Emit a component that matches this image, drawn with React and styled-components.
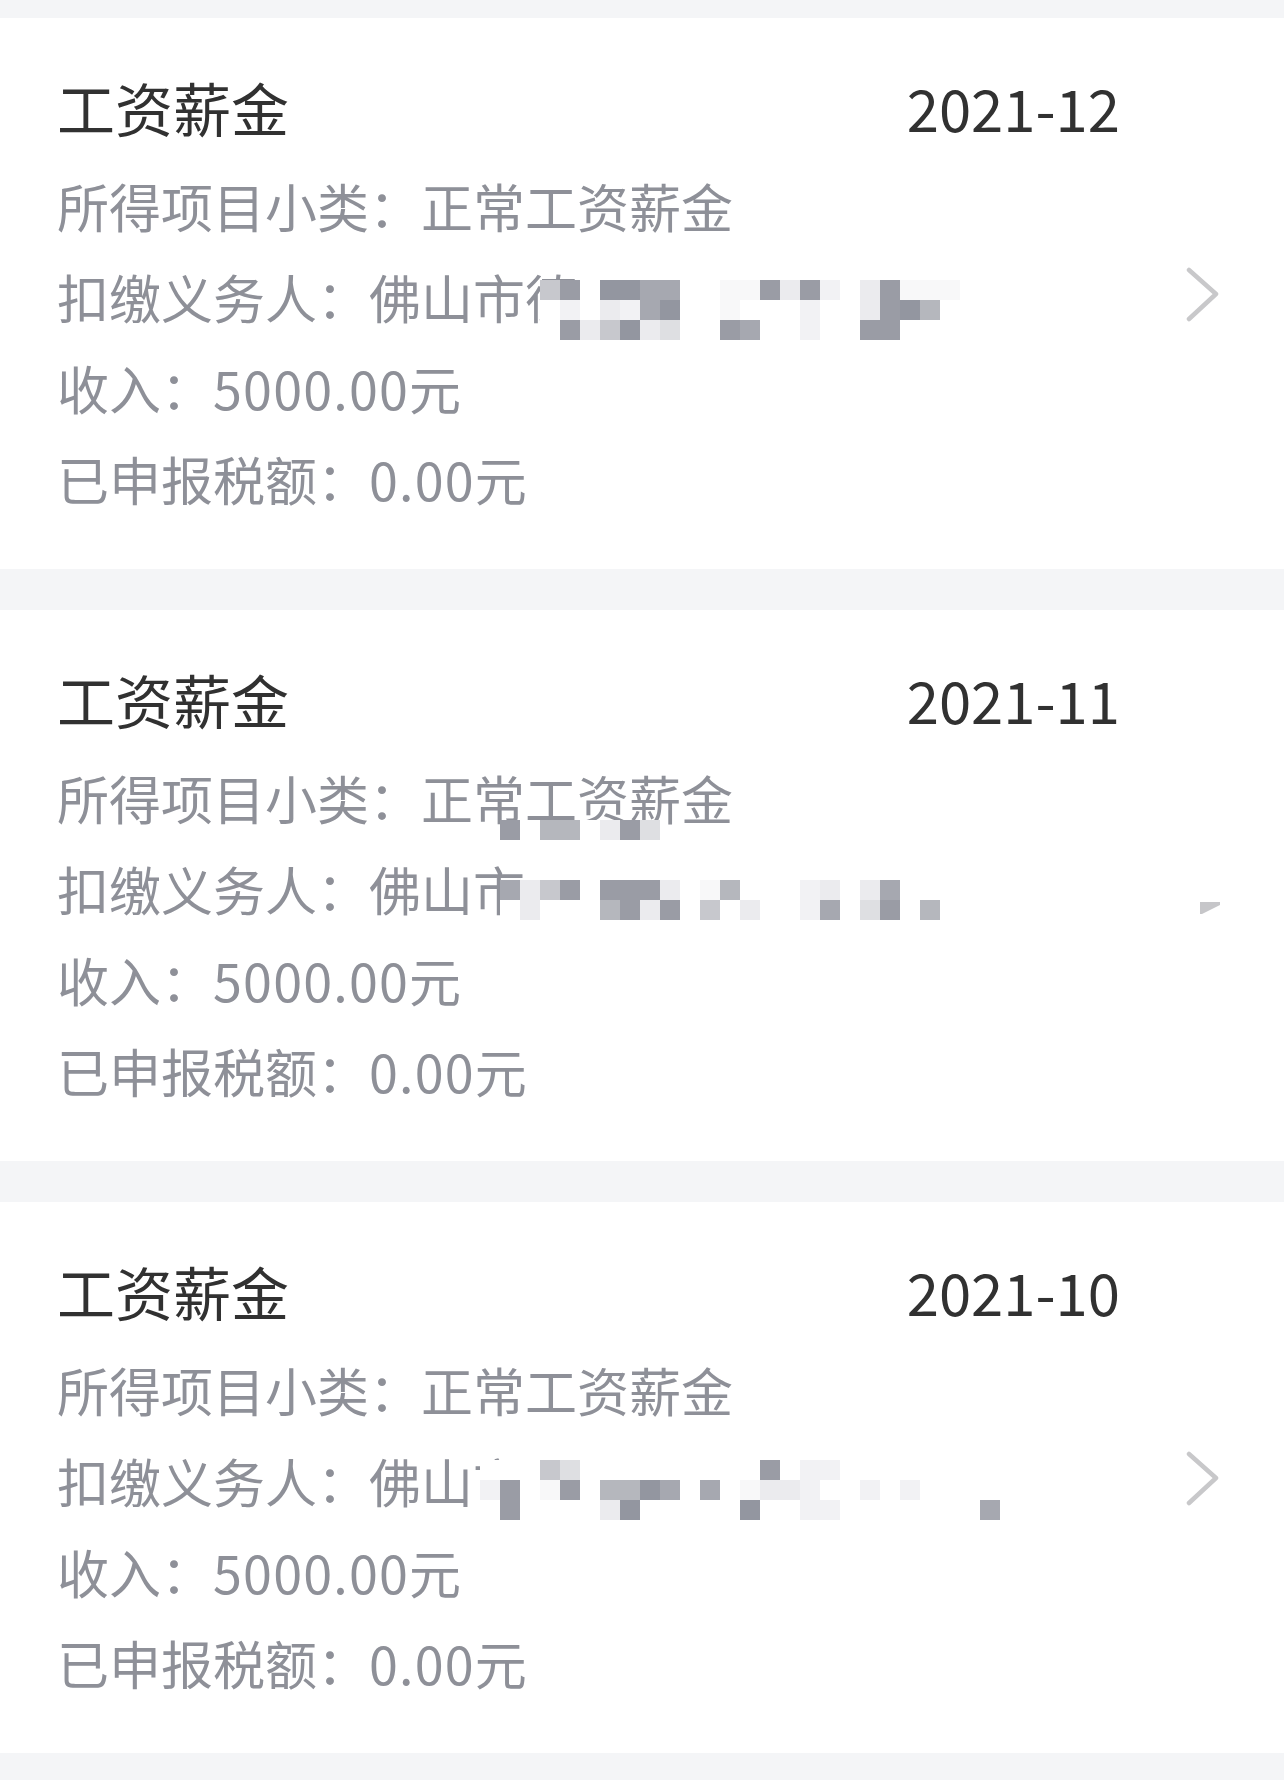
import styled, { createGlobalStyle } from "styled-components";

const GlobalStyle = createGlobalStyle`
  html, body {
    margin: 0;
    padding: 0;
    background: #f4f5f7;
  }
  body {
    font-family: "Noto Sans CJK SC", "Noto Sans", sans-serif;
  }
`;

// mosaic shades
const SHADES = {
  ".": "#ffffff",
  " ": "transparent",
  a: "#f8f8f9",
  b: "#f2f2f4",
  c: "#ebebee",
  d: "#dedfe2",
  e: "#c7c8cd",
  f: "#b5b7bd",
  g: "#a6a8b0",
  h: "#9a9ca5",
  i: "#9396a0",
};

const CELL = 20;

const records = [
  {
    month: "2021-12",
    payer: "佛山市德",
    mosaic: {
      2: { from: 3, top: 29, rows: ["eh.iigg..aahchb.chaaa", ".b.cbgi..a...b..chif.", ".hceicd..hg..b..hh..."] },
    },
    chevron: true,
  },
  {
    month: "2021-11",
    payer: "佛山市",
    mosaic: {
      1: { from: 1, top: 68, rows: ["h.ff.chd"] },
      2: { from: 1, top: 37, rows: ["gceh.hhhc.af...bc.cg..", ".c...fhch.e.c..bg.dh.f"] },
    },
    chevron: false,
  },
  {
    month: "2021-10",
    payer: "佛山市",
    mosaic: {
      2: {
        from: 0,
        top: 25,
        rows: ["...ed.........h.bb........", "bh.ah.ffig.g.accb..b.b....", ".h....ci.....i..bb.......g"],
      },
    },
    chevron: true,
  },
];

export default function App() {
  return (
    <>
      <GlobalStyle />
      <Page>
        {records.map((r) => (
          <Card key={r.month}>
            <Body>
              <Head>
                <Title>工资薪金</Title>
                <Month>{r.month}</Month>
              </Head>
              <Line>
                所得项目小类：正常工资薪金
                {r.mosaic[1] && <Mosaic {...r.mosaic[1]} />}
              </Line>
              <Line>
                扣缴义务人：{r.payer}
                {r.mosaic[2] && <Mosaic {...r.mosaic[2]} />}
              </Line>
              <Line>
                收入：<Amount>5000.00</Amount>元
              </Line>
              <Line>
                已申报税额：<Amount>0.00</Amount>元
              </Line>
            </Body>
            <Arrow width="34" height="56" viewBox="0 0 34 56">
              {r.chevron ? (
                <polyline
                  points="3,4 30,28 3,53"
                  fill="none"
                  stroke="#c8c8ca"
                  strokeWidth="4.5"
                  strokeLinecap="round"
                  strokeLinejoin="round"
                />
              ) : (
                <polygon points="14,44 34,44 34,47 14,57" fill="#c6c6c9" />
              )}
            </Arrow>
          </Card>
        ))}
      </Page>
    </>
  );
}

function Mosaic({ from, top, rows }) {
  return (
    <Pixels $left={423 + from * CELL} $top={top} $cols={rows[0].length}>
      {rows.map((row, y) =>
        row.split("").map((ch, x) => <Pixel key={`${y}-${x}`} $c={SHADES[ch]} />)
      )}
    </Pixels>
  );
}

const Page = styled.div`
  padding: 18px 0 30px;
  min-height: 1780px;
  box-sizing: border-box;
`;

const Card = styled.section`
  height: 551px;
  box-sizing: border-box;
  background: #ffffff;
  display: flex;
  align-items: center;
  padding: 0 64px 0 57px;
  margin-bottom: 41px;
`;

const Body = styled.div`
  flex: 1;
  align-self: stretch;
  padding-top: 36px;
  margin-right: 66px;
  min-width: 0;
`;

const Head = styled.div`
  height: 106px;
  display: flex;
  justify-content: space-between;
  align-items: center;
  color: #313131;
  font-size: 58px;
  line-height: 106px;
`;

const Title = styled.span`
  letter-spacing: 0;
`;

const Month = styled.span`
  letter-spacing: 0;
`;

const Line = styled.div`
  position: relative;
  height: 91px;
  line-height: 91px;
  font-size: 52px;
  color: #8e9098;
  white-space: nowrap;
`;

const Amount = styled.span`
  letter-spacing: 1.2px;
`;

const Pixels = styled.div`
  position: absolute;
  left: ${(p) => p.$left}px;
  top: ${(p) => p.$top}px;
  display: grid;
  grid-template-columns: repeat(${(p) => p.$cols}, ${CELL}px);
  grid-auto-rows: ${CELL}px;
`;

const Pixel = styled.span`
  background: ${(p) => p.$c};
`;

const Arrow = styled.svg`
  flex-shrink: 0;
  display: block;
`;
